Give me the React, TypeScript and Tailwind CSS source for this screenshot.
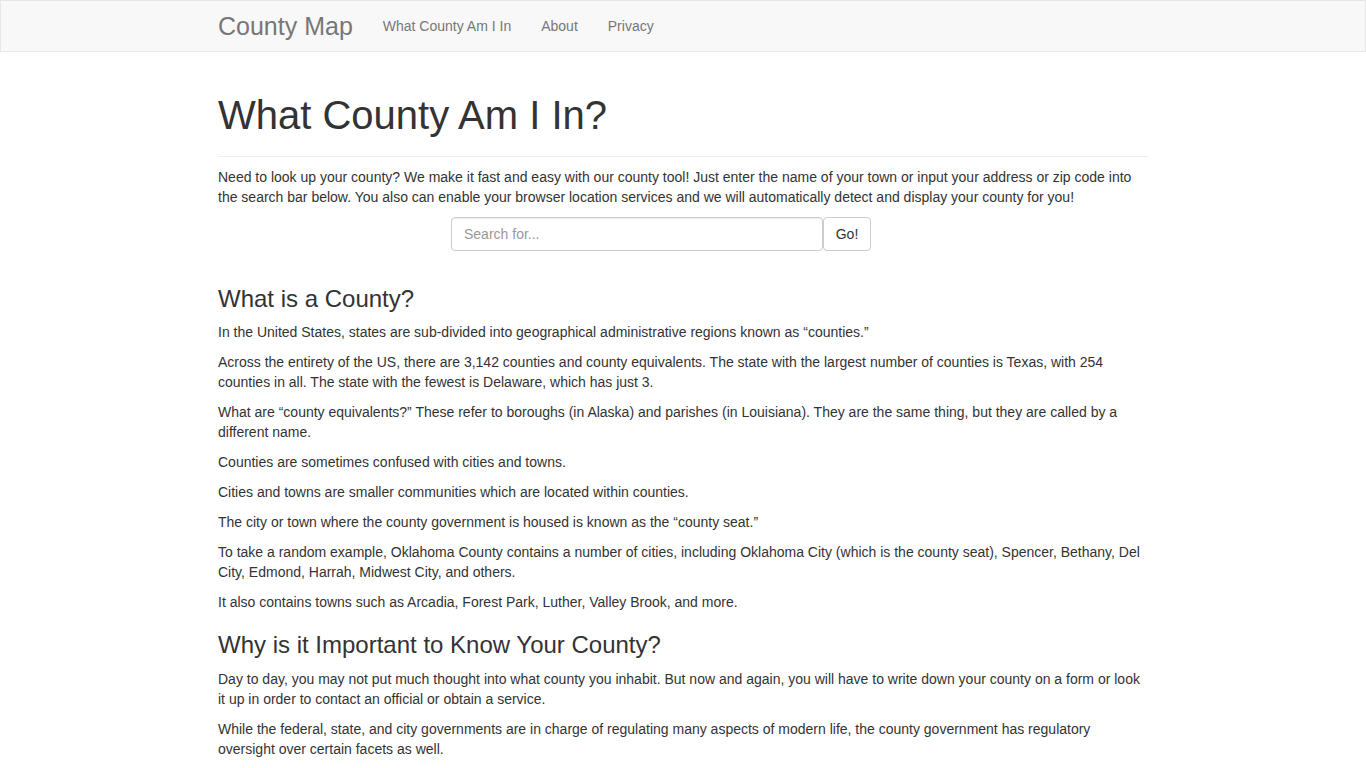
import React from "react";

const navLinks = ["What County Am I In", "About", "Privacy"];

const countyParas = [
  "In the United States, states are sub-divided into geographical administrative regions known as \u201ccounties.\u201d",
  "Across the entirety of the US, there are 3,142 counties and county equivalents. The state with the largest number of counties is Texas, with 254 counties in all. The state with the fewest is Delaware, which has just 3.",
  "What are \u201ccounty equivalents?\u201d These refer to boroughs (in Alaska) and parishes (in Louisiana). They are the same thing, but they are called by a different name.",
  "Counties are sometimes confused with cities and towns.",
  "Cities and towns are smaller communities which are located within counties.",
  "The city or town where the county government is housed is known as the \u201ccounty seat.\u201d",
  "To take a random example, Oklahoma County contains a number of cities, including Oklahoma City (which is the county seat), Spencer, Bethany, Del City, Edmond, Harrah, Midwest City, and others.",
  "It also contains towns such as Arcadia, Forest Park, Luther, Valley Brook, and more.",
];

const whyParas = [
  "Day to day, you may not put much thought into what county you inhabit. But now and again, you will have to write down your county on a form or look it up in order to contact an official or obtain a service.",
  "While the federal, state, and city governments are in charge of regulating many aspects of modern life, the county government has regulatory oversight over certain facets as well.",
];

function Navbar() {
  return (
    <nav className="border border-[#e7e7e7] bg-[#f8f8f8]">
      <div className="mx-auto flex h-[50px] w-[960px] items-center px-[15px]">
        <a href="#" className="-ml-[15px] px-[15px] text-[25px] leading-[20px] text-[#777]">
          County Map
        </a>
        <ul className="flex">
          {navLinks.map((l) => (
            <li key={l}>
              <a href="#" className="block px-[15px] py-[15px] text-[14px] leading-[20px] text-[#777]">
                {l}
              </a>
            </li>
          ))}
        </ul>
      </div>
    </nav>
  );
}

export default function App() {
  return (
    <div className="min-h-screen bg-white font-['Liberation_Sans',Arial,sans-serif] text-[14px] leading-[20px] text-[#333]">
      <Navbar />
      <div className="mx-auto w-[960px] px-[15px]">
        <div className="mt-[41px] border-b border-[#eee] pb-[19px]">
          <h1 className="text-[40px] leading-[44px] font-normal">What County Am I In?</h1>
        </div>
        <p className="mt-[10px] mb-[10px]">
          Need to look up your county? We make it fast and easy with our county tool! Just enter the name of your town
          or input your address or zip code into the search bar below. You also can enable your browser location
          services and we will automatically detect and display your county for you!
        </p>
        <div className="mb-[35px] ml-[233px] flex">
          <input
            type="text"
            placeholder="Search for..."
            className="h-[34px] w-[372px] rounded-[4px] border border-[#ccc] px-[12px] py-[6px] text-[14px] text-[#555] shadow-[inset_0_1px_1px_rgba(0,0,0,0.075)] outline-none placeholder:text-[#999]"
          />
          <button className="h-[34px] w-[48px] rounded-[4px] border border-[#ccc] bg-white text-[14px] text-[#333]">
            Go!
          </button>
        </div>

        <h2 className="mt-[20px] mb-[10px] text-[24px] leading-[1.1] font-normal">What is a County?</h2>
        {countyParas.map((p, i) => (
          <p key={i} className="mb-[10px]">
            {p}
          </p>
        ))}

        <h2 className="mt-[20px] mb-[10px] text-[24px] leading-[1.1] font-normal">
          Why is it Important to Know Your County?
        </h2>
        {whyParas.map((p, i) => (
          <p key={i} className="mb-[10px]">
            {p}
          </p>
        ))}
      </div>
    </div>
  );
}
